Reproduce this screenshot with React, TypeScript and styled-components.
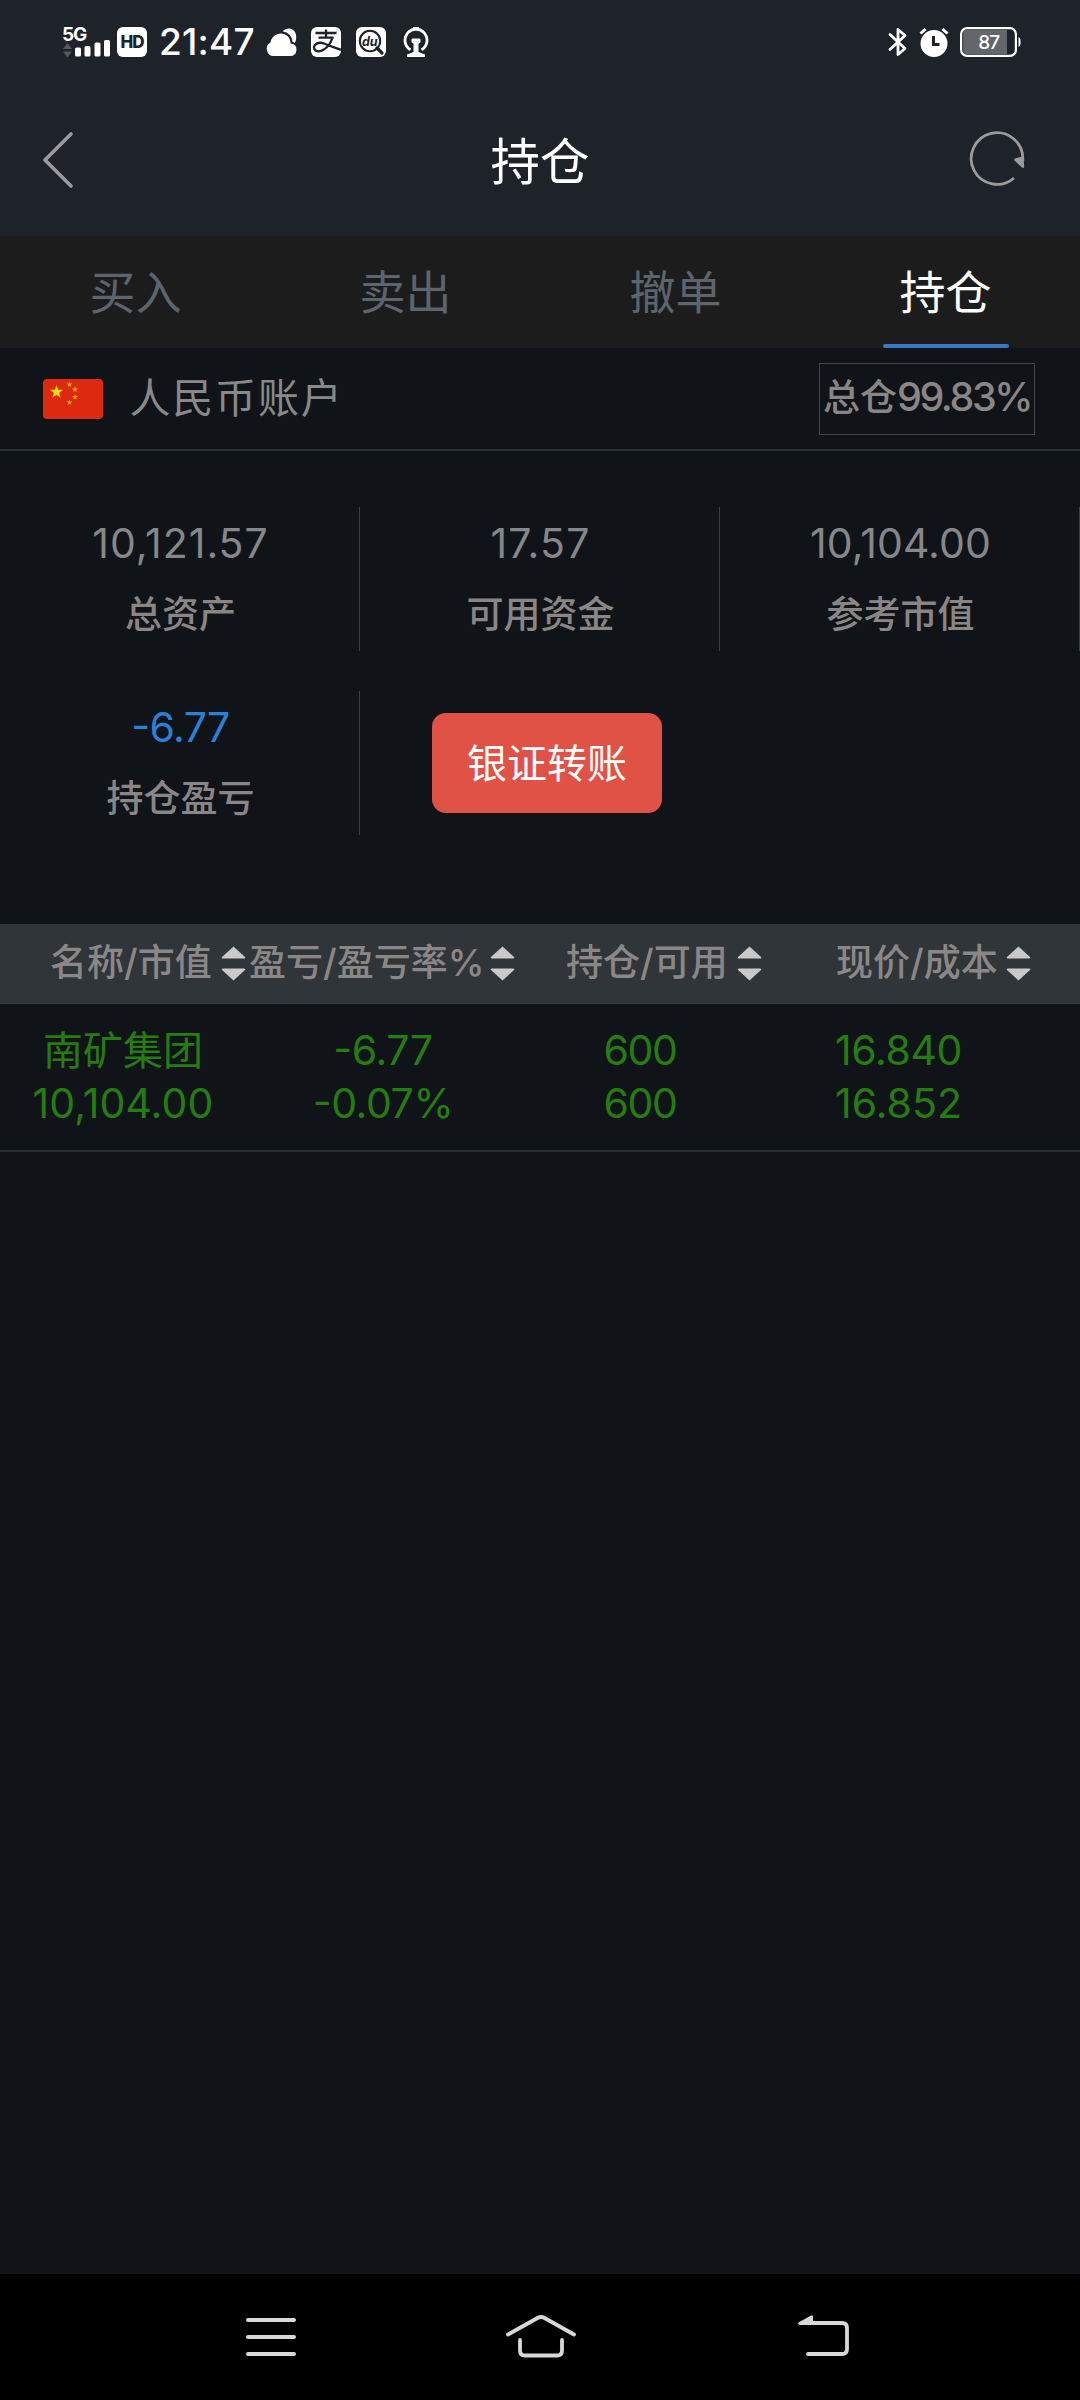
import React from "react";
import styled, { createGlobalStyle } from "styled-components";

const GlobalStyle = createGlobalStyle`
  * { box-sizing: border-box; }
  html, body { margin: 0; padding: 0; background: #101418; }
  body { font-family: "Inter", "Noto Sans CJK SC", sans-serif; }
`;

const Screen = styled.div`
  width: 1080px;
  height: 2400px;
  display: flex;
  flex-direction: column;
  background: #101418;
  overflow: hidden;
`;

const StatusBar = styled.div`
  height: 84px;
  display: flex;
  justify-content: space-between;
  align-items: center;
  padding: 0 58px 0 62px;
  background: #1e2229;
  color: #fff;
`;

const StatusGroup = styled.div`
  display: flex;
  align-items: center;
  height: 84px;
`;

const Signal = styled.div`
  width: 55px;
  display: flex;
  flex-direction: column;
  padding-top: 2px;
`;

const SignalLabel = styled.span`
  font-size: 19px;
  line-height: 15px;
  font-weight: 700;
  letter-spacing: -1.2px;
  height: 13px;
`;

const HdBadge = styled.span`
  width: 30px;
  height: 30px;
  border-radius: 6px;
  background: #fff;
  color: #1e2229;
  font-size: 17px;
  font-weight: 800;
  line-height: 30px;
  text-align: center;
  letter-spacing: -1px;
`;

const Clock = styled.span`
  width: 106px;
  padding-left: 12px;
  font-size: 37px;
  line-height: 84px;
  font-weight: 500;
  letter-spacing: 0.2px;
  white-space: nowrap;
`;

const Glyph = styled.svg<{ $gap?: number }>`
  display: block;
  flex: none;
  margin-left: ${(p) => p.$gap ?? 0}px;
`;

const Header = styled.header`
  height: 152px;
  display: grid;
  grid-template-columns: 120px 1fr 120px;
  align-items: center;
  background: #1e2229;
`;

const Title = styled.h1`
  margin: 0;
  text-align: center;
  color: #fff;
  font-size: 49.5px;
  font-weight: 400;
  line-height: 60px;
  padding-top: 4px;
`;

const IconButton = styled.button<{ $end?: boolean }>`
  display: flex;
  justify-content: ${(p) => (p.$end ? "flex-end" : "flex-start")};
  padding: ${(p) => (p.$end ? "0 55px 2px 0" : "0 0 1px 41px")};
  border: 0;
  background: none;
`;

const Tabs = styled.nav`
  height: 112px;
  display: grid;
  grid-template-columns: repeat(4, 1fr);
  background: #1c1c1c;
`;

const Tab = styled.div<{ $active?: boolean }>`
  display: flex;
  flex-direction: column;
  align-items: center;
  padding: 5px 0 0 1px;
  font-size: 46px;
  line-height: 103px;
  color: ${(p) => (p.$active ? "#fff" : "#5c646e")};
  &::after {
    content: "";
    width: 126px;
    height: 4px;
    border-radius: 2px;
    background: ${(p) => (p.$active ? "#3a77c3" : "transparent")};
  }
`;

const Account = styled.section`
  height: 103px;
  display: flex;
  align-items: center;
  padding: 0 45px 0 43px;
  border-bottom: 2px solid #2a3034;
`;

const AccountName = styled.span`
  flex: 1;
  padding-left: 26.5px;
  color: #88898b;
  font-size: 41px;
  line-height: 60px;
  letter-spacing: 1.8px;
  margin-top: -1px;
`;

const Ratio = styled.div`
  width: 216px;
  height: 72px;
  display: flex;
  justify-content: center;
  align-items: baseline;
  border: 1px solid #3f4549;
  color: #8a8686;
  font-size: 37px;
  line-height: 67px;
  font-weight: 500;
  white-space: nowrap;
`;

const RatioNumber = styled.span`
  font-size: 39.5px;
  letter-spacing: -2.4px;
`;

const Summary = styled.section`
  display: grid;
  grid-template-columns: repeat(3, 360px);
  grid-auto-rows: 144px;
  row-gap: 40px;
  padding-top: 56px;
  height: 473px;
`;

const Stat = styled.div`
  display: flex;
  flex-direction: column;
  align-items: center;
  padding: 8px 0 0 2px;
  border-right: 1px solid #3a4145;
`;

const StatValue = styled.span<{ $loss?: boolean; $tracking: number }>`
  font-size: 41px;
  line-height: 56px;
  letter-spacing: ${(p) => p.$tracking}px;
  font-feature-settings: "case";
  color: ${(p) => (p.$loss ? "#2b80d8" : "#868789")};
`;

const StatLabel = styled.span`
  margin-top: 18.5px;
  font-size: 37px;
  line-height: 50px;
  font-weight: 500;
  color: #8a8686;
`;

const TransferButton = styled.button`
  width: 230px;
  height: 100px;
  margin: 22px 0 0 72px;
  padding: 0;
  border: 0;
  border-radius: 14px;
  background: #e05246;
  color: #fff;
  font-family: inherit;
  font-size: 40px;
  line-height: 102px;
`;

const TableHead = styled.div`
  height: 80px;
  display: grid;
  grid-template-columns: 199px 317px 270px 245px;
  padding-left: 50px;
  background: #303539;
  border-bottom: 1px solid #343c40;
`;

const HeadCell = styled.div<{ $gap?: number }>`
  display: flex;
  align-items: center;
  gap: ${(p) => p.$gap ?? 9}px;
  color: #8c8787;
  font-size: 37px;
  line-height: 78px;
  height: 78px;
  font-weight: 500;
  white-space: nowrap;
`;

const Row = styled.div`
  height: 148px;
  display: grid;
  grid-template-columns: 246px 274px 240px 320px;
  padding-top: 20px;
  border-bottom: 2px solid #2a3134;
`;

const Cell = styled.div<{ $left?: boolean }>`
  display: flex;
  flex-direction: column;
  align-items: ${(p) => (p.$left ? "flex-start" : "center")};
  padding-left: ${(p) => (p.$left ? 75 : 0)}px;
  color: #257c10;
  font-size: 41px;
  line-height: 53px;
`;

const Figure = styled.span<{ $tracking?: number }>`
  letter-spacing: ${(p) => p.$tracking ?? -0.4}px;
  font-feature-settings: "case";
`;

const StockName = styled.span`
  font-size: 40px;
`;

const Spacer = styled.div`
  flex: 1;
`;

const NavBar = styled.footer`
  height: 126px;
  display: grid;
  grid-template-columns: 270px 270px 1fr 257px;
  justify-items: end;
  align-items: center;
  background: #000;
`;

const NavButton = styled.div<{ $shift: number }>`
  display: flex;
  justify-content: flex-start;
  width: 72px;
  margin-right: ${(p) => p.$shift}px;
`;

const SortIcon = () => (
  <Glyph width="25" height="35" viewBox="0 0 25 35" fill="#c9c9c9">
    <path d="M12.5 0.5 L24 11 Q25 12.5 23 12.5 H2 Q0 12.5 1 11 Z" />
    <path d="M12.5 34.5 L24 24 Q25 22.5 23 22.5 H2 Q0 22.5 1 24 Z" />
  </Glyph>
);

const star = (cx: number, cy: number, r: number) =>
  Array.from({ length: 10 }, (_, i) => {
    const a = -Math.PI / 2 + (i * Math.PI) / 5;
    const d = i % 2 ? r * 0.4 : r;
    return `${(cx + d * Math.cos(a)).toFixed(2)},${(cy + d * Math.sin(a)).toFixed(2)}`;
  }).join(" ");

const Flag = () => (
  <Glyph width="60" height="40" viewBox="0 0 60 40">
    <rect width="60" height="40" rx="4" fill="#dc2910" />
    <polygon points={star(13.5, 13, 7)} fill="#ffde00" />
    {[[26.5, 5.5], [32, 10.5], [32, 18], [26.5, 23.5]].map(([x, y]) => (
      <polygon key={`${x}-${y}`} points={star(x, y, 3.1)} fill="#fbae12" />
    ))}
  </Glyph>
);

const stats = [
  { value: "10,121.57", label: "总资产", tracking: 1 },
  { value: "17.57", label: "可用资金", tracking: 1.2 },
  { value: "10,104.00", label: "参考市值", tracking: 0.1 },
  { value: "-6.77", label: "持仓盈亏", tracking: -0.6, loss: true },
];

const columns = [
  { label: "名称/市值", gap: 9 },
  { label: "盈亏/盈亏率%", gap: 6 },
  { label: "持仓/可用", gap: 9 },
  { label: "现价/成本", gap: 8 },
];

export default function App() {
  return (
    <>
      <GlobalStyle />
      <Screen>
        <StatusBar>
          <StatusGroup>
            <Signal>
              <SignalLabel>5G</SignalLabel>
              <Glyph width="50" height="20" viewBox="0 0 50 20">
                <path d="M1 9 L5.500 3 L10 9Z M1 11.500 L5.500 17.500 L10 11.500Z" fill="#55585c" />
                <g fill="#fff">
                  <rect x="13" y="7.500" width="6" height="9" rx="1.500" />
                  <rect x="22.500" y="6" width="6" height="10.500" rx="1.500" />
                  <rect x="32.500" y="2.500" width="6" height="14" rx="1.500" />
                  <rect x="42" y="0" width="6" height="16.500" rx="1.500" />
                </g>
              </Glyph>
            </Signal>
            <HdBadge>HD</HdBadge>
            <Clock>21:47</Clock>
            <Glyph $gap={13} width="31" height="30" viewBox="0 0 31 30" fill="#fff">
              <path d="M7.500 29 A7.200 7.200 0 0 1 4.500 15.500 A10.500 10.500 0 0 1 21.500 9 Q24.500 12 24.500 16.500 Q30.500 16.800 30.500 23 Q30 29 24 29Z" />
              <path d="M16.500 4.200 Q20 0.800 24 1.600 Q31 3.500 30.200 12 Q29.800 14.500 28.800 16 Q27.800 15 26.500 14.800 Q25.500 6 16.500 4.200Z" />
            </Glyph>
            <Glyph $gap={14} width="30" height="30" viewBox="0 0 30 30">
              <rect width="30" height="30" rx="6" fill="#fff" />
              <g fill="none" stroke="#1e2229" strokeWidth="2.300">
                <path d="M15 2.500 V10 M4.500 6 H25.500 M7.500 10.600 H22.500" />
                <path d="M21.500 10.500 Q19 19 12.500 22.800 Q8 25.500 4.500 23.500 Q1.800 21 4 17.800 Q7.500 14.500 13 16.500 Q20 19.500 30 22.800" />
              </g>
            </Glyph>
            <Glyph $gap={15} width="30" height="30" viewBox="0 0 30 30">
              <rect width="30" height="30" rx="6" fill="#fff" />
              <circle cx="14" cy="14" r="10.200" fill="none" stroke="#1e2229" strokeWidth="2" />
              <path d="M21 21 L26 26" stroke="#1e2229" strokeWidth="3.200" strokeLinecap="round" />
              <text x="13.800" y="18.600" textAnchor="middle" fontFamily="Inter, sans-serif" fontStyle="italic" fontWeight="700" fontSize="12.500" fill="#1e2229">du</text>
            </Glyph>
            <Glyph $gap={17} width="26" height="30" viewBox="0 0 26 30">
              <path d="M7.500 22.800 A11 11 0 1 1 18.500 22.800" fill="none" stroke="#fff" strokeWidth="2.800" />
              <path d="M10 0 H16 V3 H10Z" fill="#fff" />
              <path d="M8.500 12.500 Q8.500 11.500 10 11.500 H16 Q17.500 11.500 17.500 12.500 V15 Q17.500 16 15.500 16.500 L15.500 25 L22 27.500 V30 H4 V27.500 L10.500 25 V16.500 Q8.500 16 8.500 15Z" fill="#fff" />
            </Glyph>
          </StatusGroup>
          <StatusGroup>
            <Glyph width="20" height="30" viewBox="0 0 20 30">
              <path d="M2 7.500 L17 21.500 L10 27.500 V2.500 L17 8.500 L2 22.500" fill="none" stroke="#fff" strokeWidth="2.800" strokeLinecap="round" strokeLinejoin="round" />
            </Glyph>
            <Glyph $gap={11} width="30" height="30" viewBox="0 0 30 30">
              <circle cx="15" cy="16.500" r="13.500" fill="#fff" />
              <path d="M1.500 6.500 L6.500 2 M28.500 6.500 L23.500 2" stroke="#fff" strokeWidth="3" />
              <path d="M14.500 9 V17.500 H20.500" fill="none" stroke="#1e2229" strokeWidth="3" />
            </Glyph>
            <Glyph $gap={11} width="62" height="30" viewBox="0 0 62 30">
              <rect x="1.100" y="1.100" width="54.800" height="27.800" rx="6" fill="none" stroke="#fff" strokeWidth="2.200" />
              <path d="M6 3 H47 V27 H6 Q3.200 27 3.200 24 V6 Q3.200 3 6 3Z" fill="#63666b" />
              <path d="M58.500 10 Q60.500 11 60.500 13 V17 Q60.500 19 58.500 20Z" fill="#fff" />
              <text x="28.800" y="21.800" textAnchor="middle" fontFamily="Inter, sans-serif" fontWeight="500" fontSize="19" letterSpacing="-0.8" fill="#fff">87</text>
            </Glyph>
          </StatusGroup>
        </StatusBar>

        <Header>
          <IconButton aria-label="back">
            <Glyph width="34" height="58" viewBox="0 0 34 58">
              <path d="M30 3 L4 29 L30 55" fill="none" stroke="#9b9b9b" strokeWidth="3.600" strokeLinecap="round" strokeLinejoin="round" />
            </Glyph>
          </IconButton>
          <Title>持仓</Title>
          <IconButton $end aria-label="refresh">
            <Glyph width="56" height="56" viewBox="0 0 56 56">
              <path d="M45 47 A25.800 25.800 0 1 1 53.800 28 V30" fill="none" stroke="#9b9b9b" strokeWidth="2.800" />
              <path d="M46 27.500 L54.500 25 L55.200 36 Q54.500 37.500 53 36.500 L45.500 29.500 Q44.800 28 46 27.500Z" fill="#9b9b9b" />
            </Glyph>
          </IconButton>
        </Header>

        <Tabs>
          <Tab>买入</Tab>
          <Tab>卖出</Tab>
          <Tab>撤单</Tab>
          <Tab $active>持仓</Tab>
        </Tabs>

        <Account>
          <Flag />
          <AccountName>人民币账户</AccountName>
          <Ratio>
            总仓<RatioNumber>99.83%</RatioNumber>
          </Ratio>
        </Account>

        <Summary>
          {stats.map((s) => (
            <Stat key={s.label}>
              <StatValue $loss={s.loss} $tracking={s.tracking}>{s.value}</StatValue>
              <StatLabel>{s.label}</StatLabel>
            </Stat>
          ))}
          <TransferButton>银证转账</TransferButton>
        </Summary>

        <TableHead>
          {columns.map((c) => (
            <HeadCell key={c.label} $gap={c.gap}>
              {c.label}
              <SortIcon />
            </HeadCell>
          ))}
        </TableHead>

        <Row>
          <Cell>
            <StockName>南矿集团</StockName>
            <Figure $tracking={0.1}>10,104.00</Figure>
          </Cell>
          <Cell>
            <Figure>-6.77</Figure>
            <Figure>-0.07%</Figure>
          </Cell>
          <Cell>
            <Figure $tracking={-1.4}>600</Figure>
            <Figure $tracking={-1.4}>600</Figure>
          </Cell>
          <Cell $left>
            <Figure>16.840</Figure>
            <Figure $tracking={0}>16.852</Figure>
          </Cell>
        </Row>

        <Spacer />

        <NavBar>
          <NavButton $shift={-48}>
            <Glyph width="50" height="44" viewBox="0 0 50 44">
              <path d="M2 5 H48 M2 22 H48 M2 39 H48" stroke="#d8d8d8" strokeWidth="4" strokeLinecap="round" />
            </Glyph>
          </NavButton>
          <NavButton $shift={-38}>
            <Glyph width="70" height="44" viewBox="0 0 70 44">
              <path d="M2 19.500 L31.500 3 Q35 1 38.500 3 L68 19.500 M14 25 V35.500 Q14 40.500 19 40.500 H51 Q56 40.500 56 35.500 V25" fill="none" stroke="#d8d8d8" strokeWidth="3.800" strokeLinecap="round" strokeLinejoin="round" />
            </Glyph>
          </NavButton>
          <NavButton $shift={-47}>
            <Glyph width="52" height="44" viewBox="0 0 52 44">
              <path d="M4 8 H44 Q49 8 49 13 V34 Q49 39 44 39 H10" fill="none" stroke="#d8d8d8" strokeWidth="3.800" strokeLinecap="round" />
              <path d="M0.500 7.500 L13 0.500 Q15 0 15 1.500 V9.900 H2 Q-0.500 9.500 0.500 7.500Z" fill="#d8d8d8" />
            </Glyph>
          </NavButton>
        </NavBar>
      </Screen>
    </>
  );
}
